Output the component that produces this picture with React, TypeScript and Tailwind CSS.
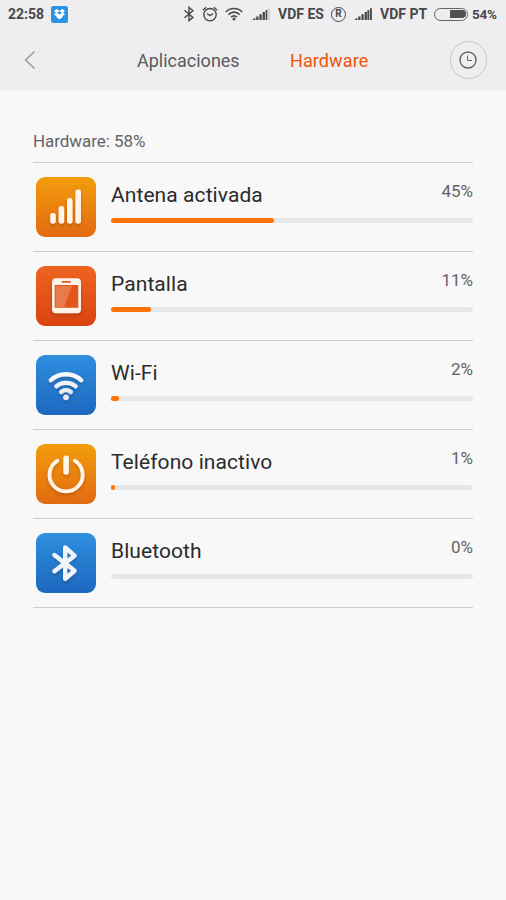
import React from "react";

function Glyph({ name }: { name: string }) {
  return (
    <svg viewBox="0 0 60 60" className="h-[60px] w-[60px]" fill="none">
      <defs>
        <linearGradient id={`white-${name}`} gradientUnits="userSpaceOnUse" x1="0" y1="15" x2="0" y2="45">
          <stop offset="0" stopColor="#ffffff" />
          <stop offset="1" stopColor="#dfe3ea" />
        </linearGradient>
        <filter id={`shade-${name}`} x="-30%" y="-30%" width="160%" height="170%">
          <feDropShadow dx="0" dy="2" stdDeviation="1.5" floodColor="#301500" floodOpacity="0.22" />
        </filter>
      </defs>
      <g filter={`url(#shade-${name})`}>
        {name === "signal" && (
          <g fill="#fff5ea">
            <rect x="14.2" y="36" width="5.6" height="10.7" rx="2.4" />
            <rect x="22.6" y="29" width="5.6" height="17.7" rx="2.4" />
            <rect x="31" y="21" width="5.6" height="25.7" rx="2.4" />
            <rect x="39.4" y="12.5" width="5.6" height="34.2" rx="2.4" />
          </g>
        )}
        {name === "screen" && (
          <>
            <rect x="16" y="12.3" width="29" height="35" rx="4" fill="#fff3ea" />
            <rect x="18.7" y="19" width="23.6" height="22.8" fill="#e2571f" />
            <path d="M19.7 20H36L28 41H19.7z" fill="#ea7a48" />
            <rect x="25.7" y="15" width="9" height="1.7" fill="#e2551d" />
          </>
        )}
        {name === "wifi" && (
          <g stroke={`url(#white-${name})`} strokeLinecap="round">
            <path d="M14.8 25.2C23 17.2 37 17.2 45.2 25.2" strokeWidth="4.4" />
            <path d="M20.3 31.4C25.5 26.7 34.5 26.7 39.7 31.4" strokeWidth="4.2" />
            <path d="M25.2 37C28 34.7 32 34.7 34.8 37" strokeWidth="4.4" />
            <circle cx="30" cy="42.3" r="2.9" fill="#e4e9f0" stroke="none" />
          </g>
        )}
        {name === "power" && (
          <g stroke="#fff5ea" strokeLinecap="round">
            <path d="M21.4 16.7A16.6 16.6 0 1 0 38.8 16.7" strokeWidth="3.8" />
            <path d="M30.1 14.2V28" strokeWidth="5.6" />
          </g>
        )}
        {name === "bluetooth" && (
          <path
            d="M18.4 22.1L38.6 37.7L29.2 45.7V14.5L38.6 22.7L18.4 38.2"
            stroke="#f1f5fa"
            strokeWidth="4.4"
            strokeLinecap="round"
            strokeLinejoin="round"
          />
        )}
      </g>
    </svg>
  );
}

function Signal({ faded = false }: { faded?: boolean }) {
  return (
    <svg viewBox="0 0 18 12" className="h-3 w-[18px] shrink-0" fill="#484848">
      <path d="M0 12l3.3-2.3V12zM4.2 8.5h2.3V12H4.2zM7.4 6.3h2.3V12H7.4zM10.6 4h2.3v8h-2.3z" />
      <path d={faded ? "M13.6 2h1.7v10h-1.7z" : "M13.4 2h1.9v10h-1.9zM16 .3h1.9V12H16z"} />
      {faded && <path d="M15.9.3H18V12h-2.1z" fill="#d5d5d7" />}
    </svg>
  );
}

function StatusBar() {
  return (
    <div className="flex h-7 items-center pl-2 text-[14px] leading-7 font-bold whitespace-nowrap text-[#484848]">
      <span className="w-[43px] shrink-0">22:58</span>
      <svg viewBox="0 0 17 17" className="mr-[115px] h-[17px] w-[17px] shrink-0">
        <rect width="17" height="17" rx="2.5" fill="#2b92e4" />
        <path
          d="M5.8 3.1L8.5 5l2.7-1.9L14 5l-2 1.7 2 1.8-2.2 1.6-.8 1.6-2.5 1.6L6 11.7l-.8-1.6L3 8.5l2-1.8L3 5zM8.5 5.2L6 6.7l2.5 1.7L11 6.7z"
          fill="#fff"
          fillRule="evenodd"
        />
      </svg>
      <svg viewBox="0 0 12 16" className="mr-[7px] h-4 w-3 shrink-0" fill="none" stroke="#484848" strokeWidth="1.4">
        <path d="M1.5 4.3l8.4 7.1L6 14.7V1.3l3.9 3.4-8.4 7" />
      </svg>
      <svg viewBox="0 0 16 16" className="mr-[7px] -mt-px h-4 w-4 shrink-0" fill="none" stroke="#484848" strokeWidth="1.4">
        <circle cx="8" cy="8.7" r="6.2" />
        <path d="M.8 4.2L4.2 1.2M11.8 1.2l3.4 3M5 7.5l3 2.1 3-2.1" />
      </svg>
      <svg viewBox="0 0 18 14" className="mr-[9px] h-[14px] w-[18px] shrink-0" fill="none" stroke="#484848" strokeWidth="1.7">
        <path d="M.8 5C5 .3 13 .3 17.2 5M3.5 7.6c3-3.3 8-3.3 11 0M6.2 10.1c1.5-1.7 4.1-1.7 5.6 0" />
        <circle cx="9" cy="12" r="1.5" fill="#484848" stroke="none" />
      </svg>
      <Signal faded />
      <span className="ml-2 w-[53px] shrink-0">VDF ES</span>
      <span className="mr-2 flex h-[15px] w-[15px] shrink-0 items-center justify-center rounded-full border-[1.5px] border-[#484848] text-[10px] leading-none">
        R
      </span>
      <Signal />
      <span className="ml-2 w-[54px] shrink-0">VDF PT</span>
      <span className="mr-1 flex h-[13px] w-[34px] shrink-0 justify-end rounded-full border border-[#666] p-[1.5px]">
        <span className="w-[16px] rounded-r-full bg-[#505050]" />
      </span>
      <span className="text-[13.5px] tracking-[-0.3px]">54%</span>
    </div>
  );
}

const orange = "from-[#f39c0c] to-[#e26a10]";
const red = "from-[#ee6420] to-[#d94310]";
const blue = "from-[#2f8fdf] to-[#1d68c0]";

const rows = [
  { name: "Antena activada", value: "45%", fill: "w-[163px]", icon: "signal", tile: orange },
  { name: "Pantalla", value: "11%", fill: "w-[40px]", icon: "screen", tile: red },
  { name: "Wi-Fi", value: "2%", fill: "w-[8px]", icon: "wifi", tile: blue },
  { name: "Teléfono inactivo", value: "1%", fill: "w-[4px]", icon: "power", tile: orange },
  { name: "Bluetooth", value: "0%", fill: "w-0", icon: "bluetooth", tile: blue },
];

export default function App() {
  return (
    <div className="h-[900px] w-[506px] overflow-hidden bg-[#f8f8f8] font-['Roboto',sans-serif]">
      <header className="h-[91px] bg-[#eeeef0]">
        <StatusBar />
        <nav className="flex h-[63px] items-center pl-6 text-[18px]">
          <svg viewBox="0 0 12 20" className="mr-[101px] h-5 w-3" fill="none" stroke="#999" strokeWidth="1.5">
            <path d="M10.5 1.5L1.5 10l9 8.5" />
          </svg>
          <span className="w-[153px] pt-px text-[#5a5a5a]">Aplicaciones</span>
          <span className="w-[160px] pt-px tracking-[0.1px] text-[#ee5509]">Hardware</span>
          <button className="flex h-[38px] w-[37px] items-center justify-center rounded-full border border-[#c8c8ca]">
            <svg viewBox="0 0 18 18" className="mr-px h-[18px] w-[18px] shrink-0" fill="none" stroke="#666">
              <circle cx="9" cy="9" r="8" strokeWidth="1.4" />
              <path d="M8.5 4.5V9.5H13" strokeWidth="1" />
            </svg>
          </button>
        </nav>
      </header>
      <main className="mx-[33px]">
        <h2 className="h-[72px] border-b border-[#cfcfcf] pt-[39px] text-[17px] leading-[22px] font-normal tracking-[-0.05px] text-[#646464]">
          Hardware: 58%
        </h2>
        {rows.map((row) => (
          <section key={row.name} className="flex h-[89px] border-b border-[#cfcfcf] pt-[14px] pl-[3px]">
            <div className={`h-[60px] w-[60px] shrink-0 overflow-hidden rounded-[9px] bg-linear-to-b ${row.tile}`}>
              <Glyph name={row.icon} />
            </div>
            <div className="ml-[15px] flex-1">
              <div className="flex h-[41px] justify-between">
                <span className="pt-[6px] text-[21px] leading-6 tracking-[0.08px] text-[#2b2b2b]">{row.name}</span>
                <span className="pt-[3px] text-[17px] leading-[22px] text-[#646464]">{row.value}</span>
              </div>
              <div className="h-[5px] rounded-full bg-[#e7e7e7]">
                <div className={`h-full rounded-full bg-[#ff7305] ${row.fill}`} />
              </div>
            </div>
          </section>
        ))}
      </main>
    </div>
  );
}
